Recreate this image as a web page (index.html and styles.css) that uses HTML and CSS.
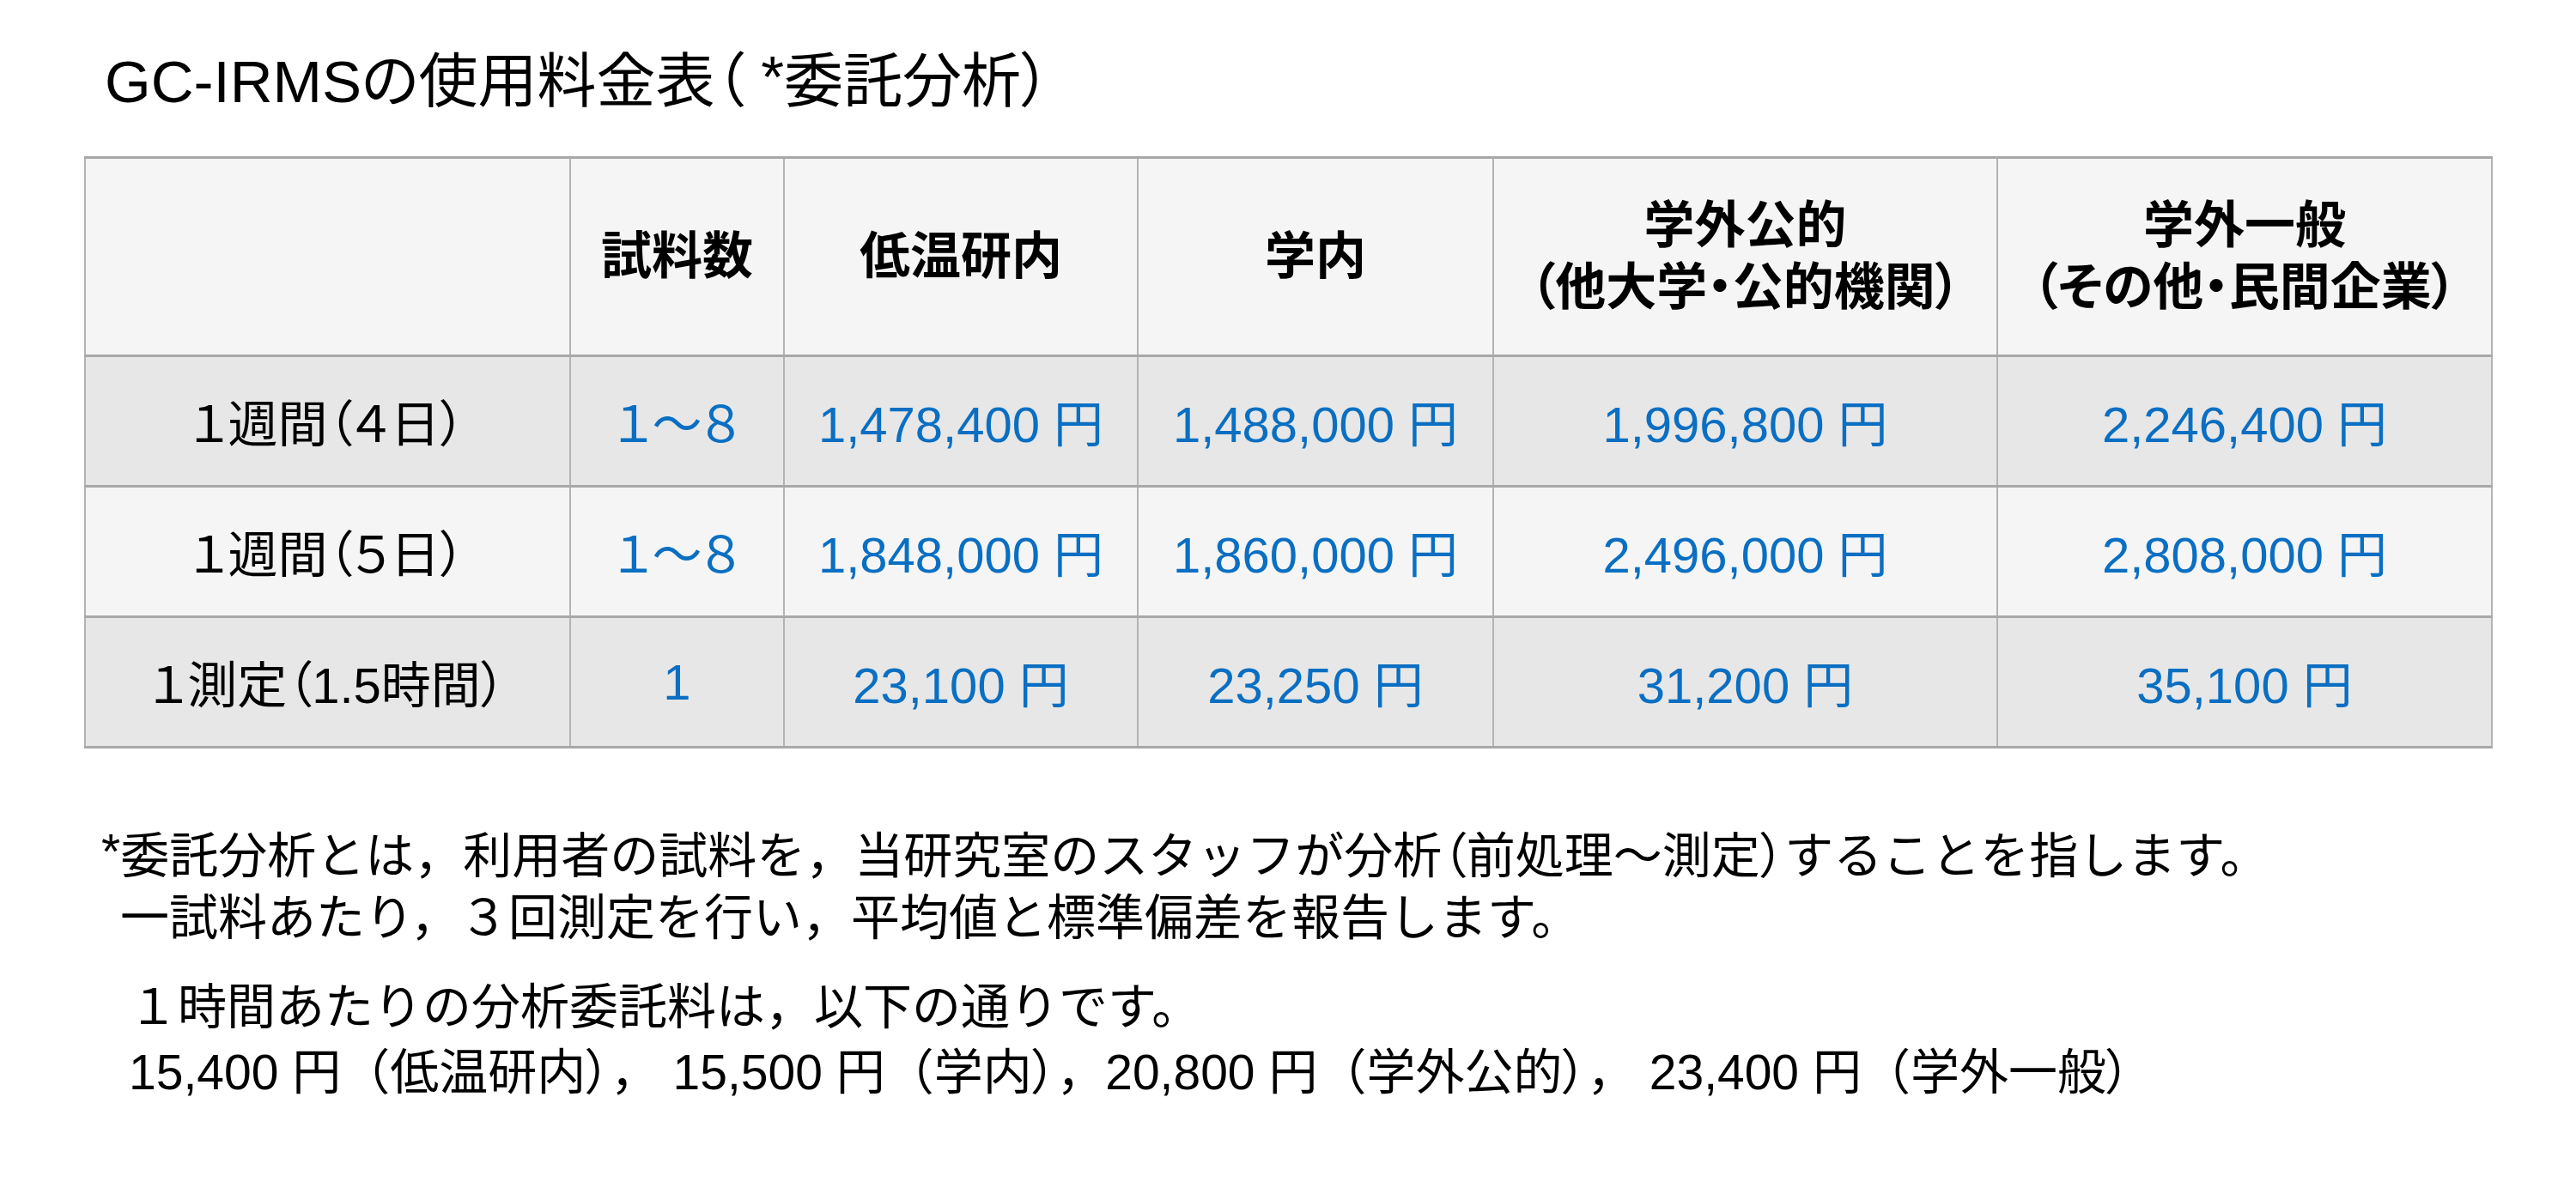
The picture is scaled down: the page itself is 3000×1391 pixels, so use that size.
FILE: index.html
```html
<!DOCTYPE html>
<html lang="ja">
<head>
<meta charset="utf-8">
<title>GC-IRMSの使用料金表</title>
<link rel="stylesheet" href="styles.css">
</head>
<body>
<div class="page">
  <h1 class="title">GC-IRMSの使用料金表（ <span class="ast">*</span>委託分析）</h1>
  <table class="fees">
    <colgroup>
      <col class="c-label">
      <col class="c-count">
      <col class="c-a">
      <col class="c-b">
      <col class="c-c">
      <col class="c-d">
    </colgroup>
    <thead>
      <tr>
        <th></th>
        <th>試料数</th>
        <th>低温研内</th>
        <th>学内</th>
        <th>学外公的<br>（他大学・公的機関）</th>
        <th>学外一般<br>（その他・民間企業）</th>
      </tr>
    </thead>
    <tbody>
      <tr class="dark">
        <td class="label">１週間（４日）</td>
        <td class="num">１～８</td>
        <td class="num">1,478,400 円</td>
        <td class="num">1,488,000 円</td>
        <td class="num">1,996,800 円</td>
        <td class="num">2,246,400 円</td>
      </tr>
      <tr class="light">
        <td class="label">１週間（５日）</td>
        <td class="num">１～８</td>
        <td class="num">1,848,000 円</td>
        <td class="num">1,860,000 円</td>
        <td class="num">2,496,000 円</td>
        <td class="num">2,808,000 円</td>
      </tr>
      <tr class="dark">
        <td class="label">１測定（1.5時間）</td>
        <td class="num">1</td>
        <td class="num">23,100 円</td>
        <td class="num">23,250 円</td>
        <td class="num">31,200 円</td>
        <td class="num">35,100 円</td>
      </tr>
    </tbody>
  </table>
  <div class="notes">
    <p class="note note-def"><span class="ast">*</span>委託分析とは，利用者の試料を，当研究室のスタッフが分析<span class="pa">（</span>前処理～測定<span class="pa">）</span>することを指します。<br><span class="indent">一試料あたり，３回測定を行い，平均値と標準偏差を報告します。</span></p>
    <p class="note note-fee">１時間あたりの分析委託料は，以下の通りです。<br>15,400 円（低温研内<span class="pa">）</span>，&nbsp;15,500 円（学内<span class="pa">）</span>，20,800 円（学外公的<span class="pa">）</span>，&nbsp;23,400 円（学外一般<span class="pa">）</span></p>
  </div>
</div>
</body>
</html>
```

FILE: styles.css
```css
html, body {
  margin: 0;
  padding: 0;
  background: #ffffff;
}

body {
  font-family: "Liberation Sans", "Noto Sans CJK JP", sans-serif;
  color: #000000;
}

.page {
  padding: 40px 0 0 98px;
}

.title {
  font-size: 69px;
  font-weight: 400;
  line-height: 100px;
  margin: 0 0 36px 24px;
  font-feature-settings: "palt";
}

.ast {
  vertical-align: 0.08em;
}

.fees {
  border-collapse: collapse;
  table-layout: fixed;
  width: 2803px;
  font-size: 58px;
  font-feature-settings: "palt";
  border: 2px solid #ababab;
  border-top-width: 3px;
  border-bottom-width: 3px;
}

.c-label { width: 565px; }
.c-count { width: 249px; }
.c-a { width: 412px; }
.c-b { width: 414px; }
.c-c { width: 587px; }
.c-d { width: 576px; }

.fees th,
.fees td {
  text-align: center;
  vertical-align: middle;
  padding: 0;
  border-left: 2px solid #b3b3b3;
  border-right: 2px solid #b3b3b3;
  border-top: 3px solid #a8a8a8;
  border-bottom: 3px solid #a8a8a8;
  white-space: nowrap;
}

.fees thead tr {
  background: #f5f5f5;
}

.fees th {
  font-weight: 700;
  font-size: 59px;
  height: 228px;
  line-height: 72px;
}

.fees td {
  height: 149px;
}

.fees tr.dark {
  background: #e7e7e7;
}

.fees tr.light {
  background: #f5f5f5;
}

.num {
  color: #0a6fc2;
}

.notes {
  margin-top: 84px;
  font-size: 57px;
}

.note {
  margin: 0;
}

.pa {
  font-feature-settings: "palt";
}

.note-def {
  margin-left: 20px;
  line-height: 73px;
}

.indent {
  padding-left: 22px;
}

.note-fee {
  margin-top: 29px;
  margin-left: 52px;
  line-height: 76px;
}
```
